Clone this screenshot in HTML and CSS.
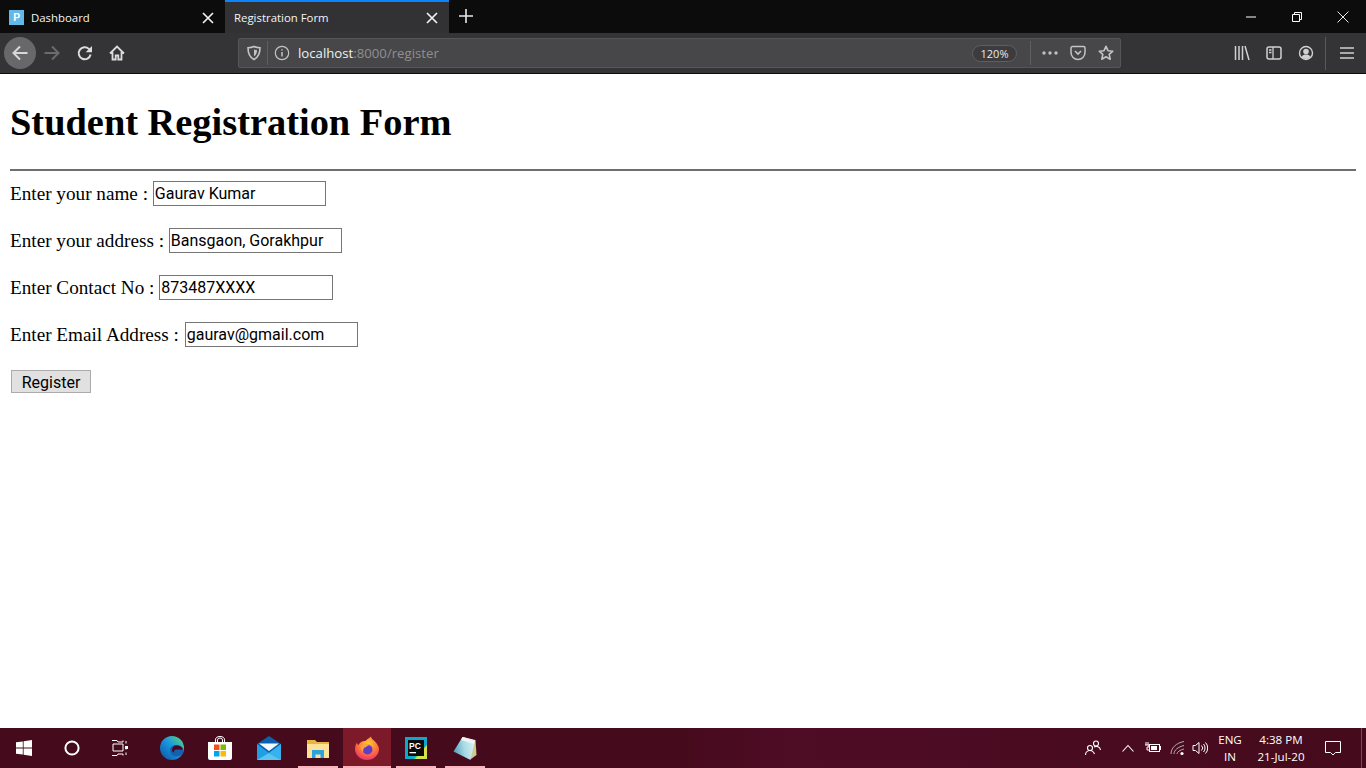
FILE: index.html
```html
<!DOCTYPE html>
<html lang="en">
<head>
<meta charset="utf-8">
<title>Registration Form</title>
<link rel="stylesheet" href="styles.css">
</head>
<body>
<div class="screen">
  <header class="chrome">
    <div class="tabbar">
      <div class="tab">
        <svg class="favicon" viewBox="0 0 16 16"><rect width="16" height="16" fill="#62b8e6"/><text x="4.4" y="12.2" class="favtext">P</text></svg>
        <span class="tab-title">Dashboard</span>
        <svg class="tab-close" viewBox="0 0 12 12"><path d="M1 1l10 10M11 1L1 11" stroke="#f0f0f0" stroke-width="1.700" fill="none"/></svg>
      </div>
      <div class="tab tab-active">
        <span class="tab-title">Registration Form</span>
        <svg class="tab-close" viewBox="0 0 12 12"><path d="M1 1l10 10M11 1L1 11" stroke="#f0f0f0" stroke-width="1.700" fill="none"/></svg>
      </div>
      <svg class="newtab" viewBox="0 0 16 16"><path d="M8 1v14M1 8h14" stroke="#e8e8e8" stroke-width="1.600" fill="none"/></svg>
      <div class="winctl">
        <div class="winbtn"><svg viewBox="0 0 12 12"><path d="M1 6h10" stroke="#fff" stroke-width="1"/></svg></div>
        <div class="winbtn"><svg viewBox="0 0 12 12"><path d="M1.500 3.500h7v7h-7zM3.500 3.500v-2h7v7h-2" stroke="#fff" stroke-width="1" fill="none"/></svg></div>
        <div class="winbtn"><svg viewBox="0 0 12 12"><path d="M.5.5l11 11M11.500.5l-11 11" stroke="#fff" stroke-width=".9" fill="none"/></svg></div>
      </div>
    </div>
    <div class="toolbar">
      <div class="nav">
        <div class="back"><svg class="ico" viewBox="0 0 16 16"><path d="M15.500 8H1.500M8 1.500L1.500 8 8 14.500" stroke="#d8d8da" stroke-width="2" fill="none"/></svg></div>
        <div class="navbtn"><svg class="ico" viewBox="0 0 16 16"><path d="M.5 8h14M8 1.500L14.500 8 8 14.500" stroke="#6b6b6e" stroke-width="2" fill="none"/></svg></div>
        <div class="navbtn navbtn-r"><svg class="ico" viewBox="0 0 16 16"><path d="M13.600 9.500a6 6 0 1 1-1.700-5.600L14 6" stroke="#dcdcde" stroke-width="2" fill="none"/><path d="M15 1v6.300H8.700z" fill="#dcdcde"/></svg></div>
        <div class="navbtn navbtn-r"><svg class="ico" viewBox="0 0 16 16"><path d="M1 8.500l7-7 7 7M3.500 7v7.500h3.200v-4h2.600v4h3.200V7" stroke="#dcdcde" stroke-width="1.800" fill="none"/></svg></div>
      </div>
      <div class="urlbar">
        <svg class="ico url-shield" viewBox="0 0 16 16"><path d="M8 1.500c2 1 4 1.200 6 1.200 0 5.500-1.500 9.500-6 11.800C3.500 12.200 2 8.200 2 2.700c2 0 4-.2 6-1.200z" stroke="#c4c4c6" stroke-width="1.600" fill="none"/><path d="M8 4.500c1 .4 2 .6 3 .6 0 3-.8 5-3 6.500z" fill="#c4c4c6"/></svg>
        <span class="urlsep urlsep-1"></span>
        <svg class="ico url-info" viewBox="0 0 16 16"><circle cx="8" cy="8" r="6.700" stroke="#c4c4c6" stroke-width="1.200" fill="none"/><path d="M8 7v4.500M8 4.200v1.400" stroke="#c4c4c6" stroke-width="1.500"/></svg>
        <span class="url"><span class="url-host">localhost</span>:8000/register</span>
        <span class="zoom">120%</span>
        <span class="urlsep urlsep-2"></span>
        <svg class="ico url-dots" viewBox="0 0 16 16"><circle cx="2" cy="8" r="1.700" fill="#c0c0c2"/><circle cx="8" cy="8" r="1.700" fill="#c0c0c2"/><circle cx="14" cy="8" r="1.700" fill="#c0c0c2"/></svg>
        <svg class="ico url-pocket" viewBox="0 0 16 16"><path d="M2.500 1.500h11a1.500 1.500 0 0 1 1.500 1.500v4.500a7 7 0 0 1-14 0V3a1.500 1.500 0 0 1 1.500-1.500z" stroke="#c4c4c6" stroke-width="1.500" fill="none"/><path d="M5 6l3 3 3-3" stroke="#c4c4c6" stroke-width="1.600" fill="none"/></svg>
        <svg class="ico url-star" viewBox="0 0 16 16"><path d="M8 1.300l2 4.400 4.800.5-3.600 3.200 1 4.800L8 11.800l-4.200 2.400 1-4.800L1.200 6.200 6 5.700z" stroke="#c4c4c6" stroke-width="1.600" fill="none" stroke-linejoin="round"/></svg>
      </div>
      <div class="tools">
        <svg class="ico" viewBox="0 0 16 16"><path d="M1.500 1v14M5 1v14M8.500 1v14M11 1l4 14" stroke="#d0d0d2" stroke-width="1.500" fill="none"/></svg>
        <svg class="ico" viewBox="0 0 16 16"><rect x="1" y="2" width="14" height="12" rx="2" stroke="#d0d0d2" stroke-width="1.500" fill="none"/><path d="M7 2v12M3 5h2.500M3 7.500h2.500" stroke="#d0d0d2" stroke-width="1.300"/></svg>
        <svg class="ico" viewBox="0 0 16 16"><circle cx="8" cy="8" r="6.500" stroke="#d0d0d2" stroke-width="1.400" fill="none"/><circle cx="8" cy="6.500" r="2.800" fill="#d0d0d2"/><path d="M3.500 12c1-2 2.500-2.500 4.500-2.500s3.500.5 4.500 2.500c-1 1.200-2.700 2-4.500 2s-3.500-.8-4.500-2z" fill="#d0d0d2"/></svg>
        <span class="toolsep"></span>
        <svg class="ico" viewBox="0 0 16 16"><path d="M1 3h14M1 8h14M1 13h14" stroke="#d0d0d2" stroke-width="1.700"/></svg>
      </div>
    </div>
  </header>

  <main class="page">
    <h1 class="title">Student Registration Form</h1>
    <hr class="rule">
    <form class="form">
      <p class="row">Enter your name : <input class="field" type="text" value="Gaurav Kumar"></p>
      <p class="row">Enter your address : <input class="field" type="text" value="Bansgaon, Gorakhpur"></p>
      <p class="row">Enter Contact No : <input class="field field-contact" type="text" value="873487XXXX"></p>
      <p class="row">Enter Email Address : <input class="field field-email" type="text" value="gaurav@gmail.com"></p>
      <p class="row"><button class="submit" type="button">Register</button></p>
    </form>
  </main>

  <footer class="taskbar">
    <div class="sys">
      <div class="tb"><svg class="tbi-s" viewBox="0 0 16 16"><path d="M0 2.300l6.800-.9v6.200H0zM7.600 1.300L16 0v7.600H7.600zM0 8.400h6.800v6.200L0 13.700zM7.600 8.400H16V16l-8.400-1.200z" fill="#fff"/></svg></div>
      <div class="tb"><svg class="tbi-s" viewBox="0 0 16 16"><circle cx="8" cy="8" r="6.600" stroke="#fff" stroke-width="2" fill="none"/></svg></div>
      <div class="tb"><svg class="tbi-s" viewBox="0 0 16 16"><path d="M0 .5h5l1 1.500h5M11 .5v1.500M1 4h10v7H1zM0 15.500h5l1-1.500h5M11 14v1.500M14 1v2.500M14 6.500v3M14 12.500V15" stroke="#fff" stroke-width="1" fill="none"/><rect x="13" y="6" width="3" height="3" fill="#fff"/></svg></div>
    </div>
    <div class="apps">
      <div class="app app-edge"><svg class="tbi" viewBox="0 0 24 24"><defs><linearGradient id="eg" x1="0" y1="1" x2="1" y2="0"><stop offset="0" stop-color="#0b4f9e"/><stop offset=".55" stop-color="#1a9ae0"/><stop offset="1" stop-color="#62dc6a"/></linearGradient></defs><circle cx="12" cy="12" r="12" fill="url(#eg)"/><path d="M23.500 15.500c-.5-4.500-3.500-6.500-7-6.500-4 0-6.500 2-6.500 5.500 0 3.500 2.500 6 6.500 6 2 0 4-.7 6-2.500z" fill="#1660b0"/><path d="M23 13.500c-1-3-3.500-4-6-4-3 0-5 2-5 4.500 0 1.500 1 2.500 2.500 2.500-1-1-.5-3 2-3 2 0 4 .5 6.500 0z" fill="#47091f"/></svg></div>
      <div class="app"><svg class="tbi" viewBox="0 0 24 24"><path d="M7.500 7V4a4.500 3.500 0 0 1 9 0v3M9.500 7V4a2.500 2 0 0 1 5 0v3" stroke="#fff" stroke-width="1" fill="none"/><path d="M0 6h24v16a2 2 0 0 1-2 2H2a2 2 0 0 1-2-2z" fill="#fff"/><rect x="6" y="8.500" width="5.500" height="5.500" fill="#f25022"/><rect x="12.500" y="8.500" width="5.500" height="5.500" fill="#7fba00"/><rect x="6" y="15" width="5.500" height="5.500" fill="#00a4ef"/><rect x="12.500" y="15" width="5.500" height="5.500" fill="#ffb900"/></svg></div>
      <div class="app"><svg class="tbi" viewBox="0 0 24 24"><path d="M12 0L0 8v16h24V8z" fill="#0a62ae"/><path d="M2 7.500h20L12 15z" fill="#f2fbff"/><path d="M0 8l12 9 12-9v16H0z" fill="#1fa0e4"/><path d="M0 24l12-7 12 7z" fill="#5cc4f0"/><path d="M12 17l12-9v16z" fill="#38b2ee"/></svg></div>
      <div class="app app-open"><svg class="tbi" viewBox="0 0 24 24"><path d="M1 4h8l2 2h12v16H1z" fill="#e8b63c"/><path d="M1 8h22v13a1 1 0 0 1-1 1H2a1 1 0 0 1-1-1z" fill="#fce29a"/><path d="M6 14h12v8h-3.500v-3.500h-5V22H6z" fill="#2ba3dc"/></svg></div>
      <div class="app app-open app-active"><svg class="tbi" viewBox="0 0 24 24"><defs><radialGradient id="ff" cx=".55" cy=".3" r=".85"><stop offset="0" stop-color="#ffcc33"/><stop offset=".5" stop-color="#ff7139"/><stop offset="1" stop-color="#e31587"/></radialGradient></defs><path d="M16 .5c0 2 2 3 3.500 4.500 3 3 4.500 6 4.500 8a12 11 0 0 1-24 0c0-3 1-5 2-6.500 0 1.500.5 2 1.500 2.500C5 6 8 4.500 10.500 5c1.500-2 3.500-2.500 5.500-4.500z" fill="url(#ff)"/><circle cx="12.500" cy="13.500" r="5" fill="#5f3dc4"/><path d="M5.500 10c2.500-2.500 7-3.500 11-.5-2-.5-4 0-5.500 1.500-1.500.5-3.500 2-2.500 5-2-1-3-3.500-3-6z" fill="#ffa23a"/></svg></div>
      <div class="app app-open"><svg class="tbi-pc" viewBox="0 0 22 22"><rect width="22" height="22" fill="#21d789"/><path d="M0 0h22v8L8 22H0z" fill="#10a8c8"/><path d="M22 8v14H10z" fill="#d8e04a"/><rect x="3" y="3" width="16" height="16" fill="#0b0b0b"/><text x="4" y="11.500" class="pctext">PC</text><rect x="4.500" y="15" width="6.500" height="1.300" fill="#fff"/></svg></div>
      <div class="app app-open"><svg class="tbi" viewBox="0 0 24 24"><defs><linearGradient id="ng" x1="0" y1=".6" x2="1" y2=".4"><stop offset="0" stop-color="#4f9fb8"/><stop offset=".5" stop-color="#a8dae4"/><stop offset="1" stop-color="#dcf0f3"/></linearGradient></defs><path d="M10 1l12.500 3 1 15-5.500 4z" fill="#cfc98e"/><path d="M9.500 1L22 4.500 17.500 24 .5 15.500z" fill="url(#ng)"/><path d="M9.500 1L22 4.500 21 8 8 4z" fill="#eef4f5"/></svg></div>
    </div>
    <div class="tray">
      <svg class="tr tr-people" viewBox="0 0 16 16"><circle cx="5" cy="8" r="2.500" stroke="#fff" stroke-width="1.100" fill="none"/><path d="M.5 15c0-3 2.500-4.500 4.500-4.500s3.500 1 4.500 3.500" stroke="#fff" stroke-width="1.100" fill="none"/><circle cx="11" cy="3.500" r="2.500" stroke="#fff" stroke-width="1.100" fill="none"/><path d="M9 7c2.500-1.500 6 0 6.500 3" stroke="#fff" stroke-width="1.100" fill="none"/></svg>
      <svg class="tr tr-up" viewBox="0 0 12 8"><path d="M.5 7.500L6 1.500l5.500 6" stroke="#fff" stroke-width="1.100" fill="none"/></svg>
      <svg class="tr tr-bat" viewBox="0 0 16 12"><path d="M1 0v3M3 0v3M0 3h4v2H2v3h2" stroke="#fff" stroke-width="1" fill="none"/><rect x="4.500" y="2.500" width="10" height="7" stroke="#fff" fill="none"/><rect x="6" y="4" width="6" height="4" fill="#fff"/><rect x="15" y="4" width="1" height="4" fill="#fff"/></svg>
      <svg class="tr tr-wifi" viewBox="0 0 16 16"><path d="M1 14C1 8 6 3 14 1.500M4 14c0-4 4-7 10-8.500M7 14c0-2 3-4 7-5" stroke="#b9b0b4" stroke-width="1" fill="none"/><circle cx="12" cy="13.500" r="1.600" fill="#fff"/></svg>
      <svg class="tr tr-vol" viewBox="0 0 16 14"><path d="M1 4.500h2.500L7 1.500v11L3.500 9.500H1z" stroke="#fff" fill="none"/><path d="M9.500 4.500a3.500 3.500 0 0 1 0 5M11.500 3a6 6 0 0 1 0 8M13.500 1.500a8 8 0 0 1 0 11" stroke="#fff" fill="none"/></svg>
      <div class="lang"><span>ENG</span><span>IN</span></div>
      <div class="clock"><span>4:38 PM</span><span>21-Jul-20</span></div>
      <svg class="tr tr-note" viewBox="0 0 16 15"><path d="M.5.500h15v11h-5L8 14l-2.500-2.500h-5z" stroke="#fff" fill="none"/></svg>
      <span class="peek"></span>
    </div>
  </footer>
</div>
</body>
</html>
```
FILE: styles.css
```css
html, body { margin: 0; padding: 0; height: 100%; overflow: hidden; background: #fff; }
.screen { width: 1366px; height: 768px; display: flex; flex-direction: column; }
.ico { width: 16px; height: 16px; flex: none; display: block; }

.chrome { flex: none; font-family: "Open Sans", "Noto Sans", sans-serif; }
.tabbar { height: 33px; background: #0c0c0d; display: flex; align-items: stretch; }
.tab { width: 225px; box-sizing: border-box; display: flex; align-items: center; padding: 2px 11px 0 9px; color: #f4f4f5; font-size: 11.4px; }
.tab-active { width: 224px; padding: 0 11px 0 9px; background: #323234; border-top: 2px solid #0a84ff; }
.favicon { width: 15px; height: 15px; margin-right: 7px; flex: none; }
.favtext { font: bold 11px "Liberation Sans", sans-serif; fill: #fff; }
.tab-title { flex: 1; white-space: nowrap; }
.tab-close { width: 12px; height: 12px; flex: none; }
.newtab { width: 16px; height: 16px; margin: 8px 0 0 9px; flex: none; }
.winctl { margin-left: auto; display: flex; }
.winbtn { width: 46px; display: flex; align-items: center; justify-content: center; }
.winbtn svg { width: 12px; height: 12px; }

.toolbar { height: 41px; box-sizing: border-box; background: #343436; border-bottom: 1px solid #0c0c0d; display: flex; align-items: center; }
.nav { width: 238px; flex: none; display: flex; align-items: center; padding-left: 4px; box-sizing: border-box; }
.back { width: 32px; height: 32px; border-radius: 50%; background: #68686a; display: flex; align-items: center; justify-content: center; }
.navbtn { width: 32px; display: flex; justify-content: center; }
.navbtn-r { padding-left: 1px; margin-right: -1px; }
.urlbar { width: 883px; height: 30px; box-sizing: border-box; flex: none; background: #474749; border: 1px solid #565658; border-radius: 2px; display: flex; align-items: center; padding-left: 7px; color: #aaa; font-size: 13.2px; }
.urlsep { width: 1px; height: 24px; background: #5f5f61; flex: none; }
.urlsep-1 { margin: 0 6px 0 5px; }
.url-info { margin: 0 8px 0 0; }
.url { flex: 1; white-space: nowrap; color: #8f8f91; }
.url-host { color: #f0f0f2; }
.zoom { width: 45px; height: 17px; box-sizing: border-box; border: 1px solid #5f5f61; border-radius: 9px; color: #e8e8ea; font-size: 11px; line-height: 15px; text-align: center; background: #3c3c3e; }
.urlsep-2 { margin: 0 11px 0 13px; }
.url-dots { margin: 0 12px 0 0; }
.url-star { margin: 0 6px 0 12px; }
.tools { flex: 1; display: flex; align-items: center; padding-left: 113px; gap: 16px; }
.toolsep { width: 1px; height: 33px; background: #58585a; margin: 0 -3px 0 -5px; }

.page { flex: 1; min-height: 0; padding: 0 10px; background: #fff; font: 19.2px "Liberation Serif", serif; color: #000; }
.title { font: bold 38.4px "Liberation Serif", serif; margin: 26px 0 0; line-height: 44px; }
.rule { margin: 25px 0 0; height: 2px; border: 0; background: #6e6e6e; }
.form { margin: 0; }
.row { margin: 0 0 19px; height: 28px; line-height: 28px; white-space: nowrap; }
.row:first-child { margin-top: 9px; }
.field { width: 173px; height: 25px; box-sizing: border-box; border: 1px solid #767676; padding: 1px 1px 0; margin: 0; border-radius: 0; font: 16px Roboto, "Open Sans", sans-serif; color: #000; background: #fff; vertical-align: 1px; outline: 0; }
.field-contact { width: 174px; }
.field-email { margin-left: 1px; }
.submit { width: 80px; height: 23px; box-sizing: border-box; margin: 2px 0 0 1px; padding: 1px 0 0; border: 1px solid #ababab; border-radius: 0; background: #e1e1e1; color: #000; font: 16px Roboto, "Open Sans", sans-serif; vertical-align: top; }

.taskbar { flex: none; height: 40px; background: linear-gradient(90deg, #450a1c, #460a1d 50%, #4e0c25 58%, #450a1c); display: flex; align-items: center; color: #fff; font: 11.600px "Open Sans", "Noto Sans", sans-serif; }
.sys { display: flex; }
.tb { width: 48px; height: 40px; display: flex; align-items: center; justify-content: center; }
.tbi-s { width: 16px; height: 16px; }
.apps { display: flex; margin-left: 2px; }
.app { width: 49px; height: 40px; box-sizing: border-box; display: flex; align-items: center; justify-content: center; position: relative; }
.app-edge { padding-left: 2px; }
.app-open::after { content: ""; position: absolute; left: 5px; right: 4px; bottom: 0; height: 2px; background: #f9b4bc; }
.app-active { background: #7d1a2a; margin-left: 1px; width: 48px; }
.app-active::after { left: 0; right: 0; }
.tbi { width: 24px; height: 24px; }
.tbi-pc { width: 22px; height: 22px; }
.pctext { font: bold 8.500px "Liberation Sans", sans-serif; fill: #fff; }
.tray { margin-left: auto; display: flex; align-items: center; height: 40px; }
.tr { flex: none; }
.tr-people { width: 16px; height: 16px; margin-right: 21px; }
.tr-up { width: 12px; height: 8px; margin-right: 11px; }
.tr-bat { width: 16px; height: 12px; margin-right: 9px; }
.tr-wifi { width: 16px; height: 16px; margin-right: 6px; }
.tr-vol { width: 16px; height: 14px; margin-right: 7px; }
.lang, .clock { display: flex; flex-direction: column; align-items: center; line-height: 17px; }
.lang { width: 30px; margin-right: 7px; }
.clock { width: 58px; margin-right: 15px; }
.tr-note { width: 16px; height: 15px; margin-right: 20px; }
.peek { width: 1px; height: 40px; background: #7a4a5a; margin-right: 4px; }
```
